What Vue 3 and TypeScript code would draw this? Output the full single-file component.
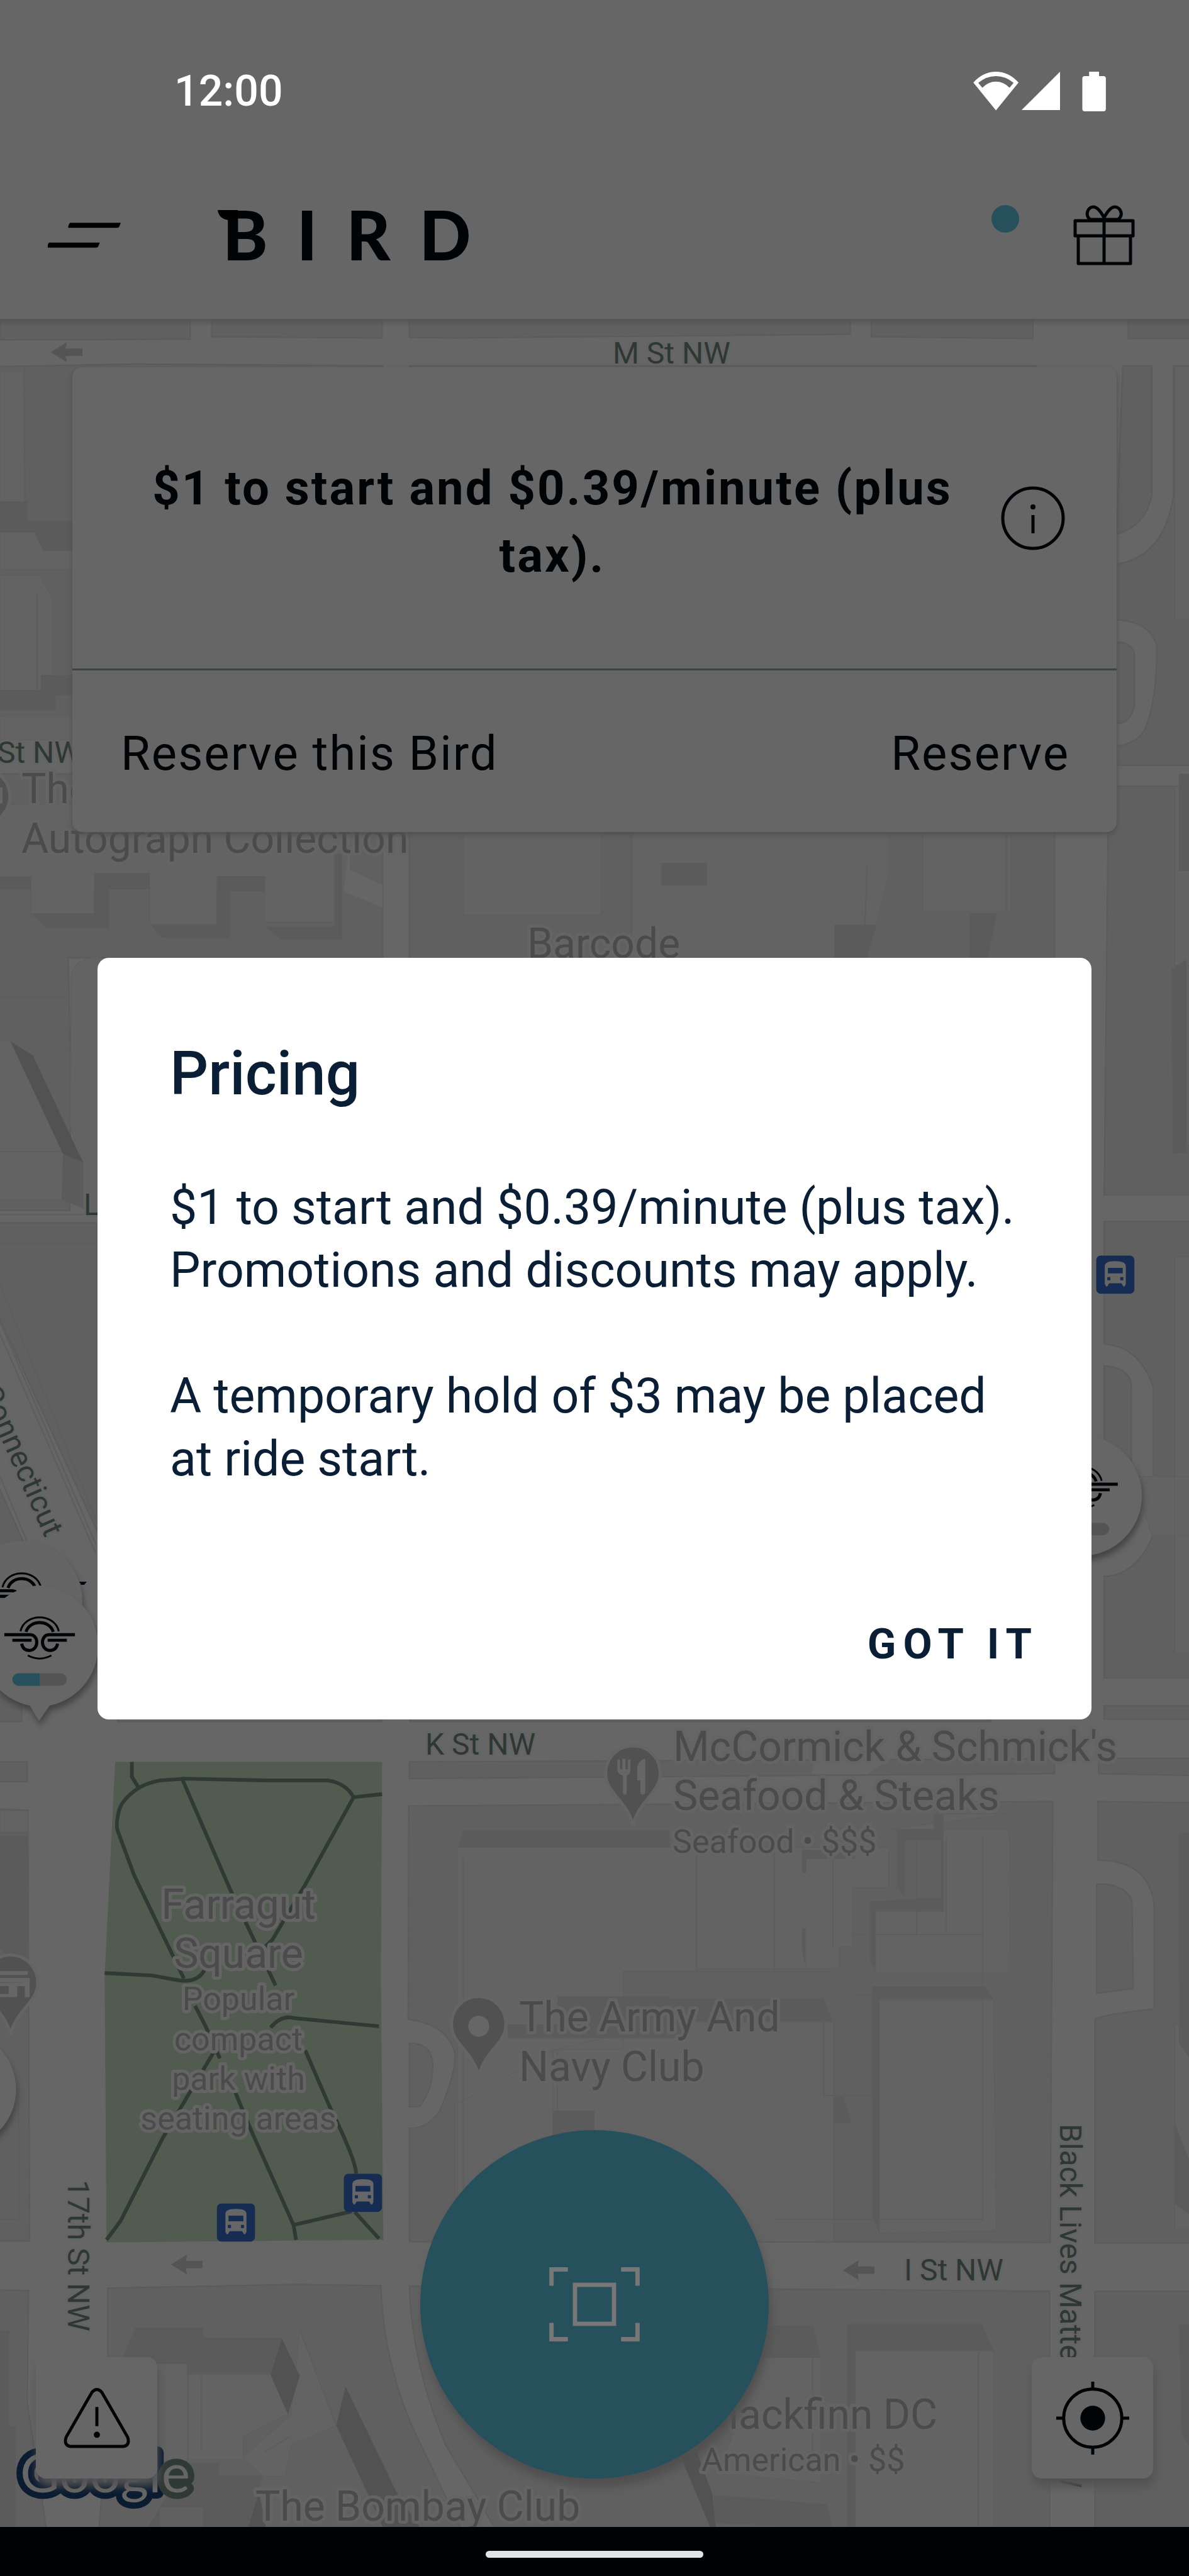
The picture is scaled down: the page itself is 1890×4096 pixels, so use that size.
<script setup lang="ts">
import { ref } from 'vue'

interface MapLabel {
  text: string
  x: number
  y: number
  kind: 'street' | 'place' | 'detail'
  anchor?: 'start' | 'middle' | 'end'
  turn?: number
}

const dialogOpen = ref(true)

const labels: MapLabel[] = [
  { text: 'M St NW', x: 974, y: 578, kind: 'street' },
  { text: 'St NW', x: -4, y: 1213, kind: 'street' },
  { text: 'L St NW', x: 133, y: 1932, kind: 'street' },
  { text: 'Connecticut', x: 72, y: 2446, kind: 'street', anchor: 'end', turn: 66 },
  { text: 'K St NW', x: 676, y: 2790, kind: 'street' },
  { text: 'I St NW', x: 1437, y: 3626, kind: 'street' },
  { text: '17th St NW', x: 108, y: 3466, kind: 'street', turn: 90 },
  { text: 'Black Lives Matter', x: 1685, y: 3377, kind: 'street', turn: 90 },
  { text: 'NW', x: 1685, y: 3956, kind: 'street', anchor: 'end', turn: 90 },
  { text: 'The', x: 34, y: 1277, kind: 'place' },
  { text: 'Autograph Collection', x: 34, y: 1356, kind: 'place' },
  { text: 'Barcode', x: 838, y: 1523, kind: 'place' },
  { text: "McCormick & Schmick's", x: 1070, y: 2800, kind: 'place' },
  { text: 'Seafood & Steaks', x: 1070, y: 2878, kind: 'place' },
  { text: 'Seafood • $$$', x: 1069, y: 2946, kind: 'detail' },
  { text: 'Farragut', x: 379, y: 3051, kind: 'place', anchor: 'middle' },
  { text: 'Square', x: 379, y: 3129, kind: 'place', anchor: 'middle' },
  { text: 'Popular', x: 379, y: 3196, kind: 'detail', anchor: 'middle' },
  { text: 'compact', x: 379, y: 3260, kind: 'detail', anchor: 'middle' },
  { text: 'park with', x: 379, y: 3323, kind: 'detail', anchor: 'middle' },
  { text: 'seating areas', x: 379, y: 3386, kind: 'detail', anchor: 'middle' },
  { text: 'The Army And', x: 825, y: 3230, kind: 'place' },
  { text: 'Navy Club', x: 825, y: 3309, kind: 'place' },
  { text: 'Blackfinn DC', x: 1490, y: 3862, kind: 'place', anchor: 'end' },
  { text: 'American • $$', x: 1115, y: 3929, kind: 'detail' },
  { text: 'The Bombay Club', x: 406, y: 4008, kind: 'place' },
]

const busStops = [
  { x: 1770, y: 2028 },
  { x: 350, y: 3559 },
  { x: 555, y: 3511 },
]

const arrows = [
  { x: 82, y: 569 },
  { x: 276, y: 3658 },
  { x: 1361, y: 3667 },
]

const parkPaths = [
  'M213 2846V2870L224 2888',
  'M300 2873L257 2876Q238 2880 224 2888Q197 2906 192 2925Q186 2950 191 2960L217 3030L297 3196',
  'M294 2873L430 2876H530Q558 2880 571 2903L617 2898',
  'M294 2873L372 3053L445 3207',
  'M571 2903L493 3044L440 3133L412 3160',
  'M169 3187L245 3191L290 3199Q322 3203 332 3178',
  'M315 3240L332 3273L355 3325',
  'M437 3275Q455 3254 475 3260L612 3273',
  'M345 3315L262 3455L195 3587L172 3618',
  'M380 3380L405 3440L474 3594L478 3618',
  'M493 3312L532 3402Q575 3490 575 3511',
  'M474 3594L568 3572M573 3573L612 3616',
]
</script>

<template>
  <main class="screen">
    <div class="status-bar">
      <time class="clock">12:00</time>
      <svg class="status-icons" width="212" height="63" viewBox="0 0 215 64" aria-hidden="true">
        <path fill="#fff" fill-rule="evenodd" d="M0 17.500Q16 0 36.500 0T73 17.500L36.500 62.500ZM8 18L14.500 26Q24 16 36.500 16T58.500 26L65 18Q52 7 36.500 7T8 18Z" />
        <path fill="#fff" d="M78 62L140 0V62Z" />
        <path fill="#fff" d="M187 0H203V7H210Q214 7 214 11V60Q214 64 210 64H180Q176 64 176 60V11Q176 7 180 7H187Z" />
      </svg>
    </div>

    <header class="app-bar">
      <button class="icon-button" type="button" aria-label="Menu">
        <svg width="116" height="40" viewBox="0 0 118 40">
          <path d="M36 0H118L116 5Q115 8 112 8H33Q33 3 36 0ZM2 32H84L82 37Q81 40 78 40H-0Q-1 35 2 32Z" />
        </svg>
      </button>
      <h1 class="wordmark">
        <svg class="wing" width="32" height="16" viewBox="0 0 32 16" aria-hidden="true"><path d="M0 0H32V16H17Q2 14 0 0Z" /></svg>BIRD
      </h1>
      <span class="dot"></span>
      <button class="icon-button" type="button" aria-label="Gifts">
        <svg width="98" height="96" viewBox="0 0 98 96" fill="none" stroke="#000407" stroke-width="5" stroke-linejoin="round">
          <rect x="3" y="25" width="92" height="24" />
          <path d="M8 50V93H91V50M49 25V93M49 20C43 9 38 3 32 3C23 3 18 16 27 23H71C81 16 75 3 66 3C60 3 55 9 49 20" />
        </svg>
      </button>
    </header>

    <section class="map-area">
      <svg class="map" viewBox="0 507 1890 3511" preserveAspectRatio="xMidYMin slice" role="img" aria-label="Map">
        <defs>
          <symbol id="bus" viewBox="0 0 62 62">
            <rect width="62" height="62" rx="8" fill="#172c52" />
            <path fill="#666" fill-rule="evenodd" d="M14 46V17Q14 9 31 9T48 17V46L46 50H44L41 45H21L18 50H16ZM19 20V29H43V20ZM18 35V40H23V35ZM39 35V40H44V35Z" />
          </symbol>
          <g id="pin">
            <path stroke="#646464" stroke-width="5" d="M0 0C25 0 44 20 44 45C44 76 10 88 0 128C-10 88-44 76-44 45C-44 20-25 0 0 0Z" />
          </g>
          <g id="wing-mark" fill="none" stroke="#000407">
            <path stroke-width="3" d="M-31-6C-24-36 24-36 31-6M-19 33Q0 43 19 33" />
            <path stroke-width="5" d="M-22-5C-16-25 16-25 22-5" />
            <path stroke-width="5" d="M-57-.500H-15C-1 0-1 24-16 25Q-27 25-29 14M-44 8.500H-13M57-.500H15C1 0 1 24 16 25Q27 25 29 14M44 8.500H13" />
          </g>
        </defs>

        <g transform="scale(.984375)">
          <rect y="500" width="1920" height="3600" fill="#666" />

          <!-- city blocks -->
          <g class="block">
            <path d="M0 510H307V548L0 549ZM342 510H617V546L342 544ZM661 510H1373V540L735 546L661 545ZM1407 510H1668V547L1407 544ZM1822 510H1930V547H1822Z" />
            <path d="M-5 592L220 588L618 591V1190H-5ZM661 591H1673V1190H661ZM-5 1250H618V1547H110Q115 1700 113 1955H-5Z" />
            <path d="M661 1250H1703V1955H661ZM1813 591H1860V800Q1850 850 1803 863ZM1895 591H1925V1236H1803V1205Q1840 1200 1850 1175Q1868 1130 1868 1045Q1860 1005 1803 1001V911Q1880 900 1895 800ZM1803 1037Q1832 1038 1832 1060V1140Q1825 1170 1803 1168Z" />
            <path d="M1790 1270H1925V1930H1783ZM1783 1973H1925V2710H1783V2546Q1835 2545 1862 2480V2240Q1840 2175 1783 2171ZM1783 2206Q1827 2210 1827 2240V2380H1783ZM1783 2755H1925V2777H1783Z" />
            <path d="M-5 1975H160V2480L-5 2120ZM-5 2395L60 2540H-5ZM-5 2690H35V2781H-5ZM190 2700H617V2781H190ZM662 2700H1600V2781H662Z" />
            <path d="M-5 2846H44V2878H-5ZM-5 2922L45 2924L48 3620H-5ZM661 2846L1703 2841V2865L661 2873ZM1774 2840H1925V2868L1774 2865ZM660 2917L1700 2910L1696 3622L661 3621V3438Q690 3438 710 3410Q735 3350 735 3320Q725 3270 659 3262ZM661 3300Q700 3300 699 3340Q697 3380 677 3403H661Z" />
            <path d="M1773 2910L1925 2912V3623H1768V3262Q1775 3255 1864 3245V3080Q1857 3005 1773 3005ZM1771 3043Q1815 3042 1828 3070L1830 3212L1771 3220Z" />
            <path d="M-5 3699L46 3700L44 3880L75 4085H-5ZM174 3696L480 3690L615 3692Q620 3830 680 3950L745 4085H160L174 3900ZM661 3693L1695 3701V4085H800L720 3950Q665 3820 661 3693ZM1768 3701H1925V4085H1768Z" />
          </g>
          <path fill="#666" d="M565 1345V1405L618 1430V1466L555 1440ZM1315 2841H1440L1400 2866H1310Z" />

          <!-- buildings -->
          <g class="building">
            <path d="M0 600H37L42 844H118V920H0ZM0 930H64L84 965V1115H0ZM0 1157H118V1195H0ZM-5 1300H540V1490H428V1440H350V1500H242V1436H152V1480H50V1416H-5Z" />
            <path d="M-5 1682H17L102 1864L100 1938H-5ZM115 1575Q120 1548 160 1545V1960L134 1952V1877L113 1820Z" />
            <path d="M748 1250H1018V1345H971V1478H748ZM1018 1250H1436V1410L1415 1494H1348V1547H1018ZM1490 1250H1633V1472H1490ZM1897 592H1925V1000H1897ZM1897 1270H1925V1850H1897ZM1830 2385H1925V2480H1860ZM1897 2030H1925V2670H1897Z" />
            <path d="M739 2984H1125V3184H1006V3310H893V3615H739ZM1125 2984H1435V3050H1377V3145H1355V3180H1125ZM1433 2955H1630L1631 3186H1414V3088H1523V2930H1630ZM1420 3230H1604L1609 3603L1420 3607ZM1085 3266H1346V3621H735V3400L900 3310Z" />
            <path d="M304 3835H437L465 3900L393 3935V3973H304ZM254 3818H302V3975H254ZM484 3765L515 3835L543 3918L470 3950L460 4000H425L393 3970L470 3900ZM1381 3797H1604V4085H1381ZM1230 3808H1325V4010L1160 3995ZM1905 2965H1925V3200H1905ZM1897 3270H1925V3600H1897ZM0 3765H15V3920H25V4085H0ZM0 2925H45V2962H0Z" />
          </g>
          <g class="outline">
            <path d="M1125 2990V3184M1250 2990V3184M1345 3000V3145M1587 2968V3205M748 3000V3600M1480 2970V3125M1528 2970V3125M1378 3125H1587M1378 3222H1408V3385H1330V3266M1007 3185H1342M1250 3585H1587V3230M1020 1250V1547M900 3310V3600M325 3840V3960M1580 3800V4080M1312 3808V3990M1625 1250V1472M1400 1400L1395 1547M0 1610H113M0 1860H100M60 960V1115M0 2960H45M30 3360V3585H0M428 3960L470 3935M543 3918L485 3765M1897 1560H1925M40 592V840" />
          </g>
          <g fill="#5b5b5b">
            <path d="M0 810H45V842H118V890H70L55 860H0ZM0 1115H66V1090H118V1123H90V1147H0Z" />
            <path d="M0 1416H50V1475H152V1410H176V1500H75L50 1475V1436H0ZM152 1410H242V1436H176V1500H152ZM242 1436V1493H350V1415H372V1515H262L242 1493ZM350 1415H428V1440H372V1493H350ZM428 1497H540V1380H552V1518H455Z" />
            <path d="M1068 1394H1142V1430H1068ZM1348 1494H1415L1400 1547H1348ZM1566 1475H1610L1595 1547H1566ZM1904 1250H1925V1407H1904ZM1892 1565L1916 1550V1863H1894Z" />
            <path d="M748 2956H1080L1082 2984H739ZM1448 2955H1508V2930H1523V3087H1413V3185L1405 3165V3070H1433L1520 3065V2973H1461V3065L1448 3045ZM1409 3208H1590L1604 3228H1420V3607L1409 3580ZM1295 2988H1380V3003H1302V3025H1295ZM1295 3115H1301V3178L1295 3150Z" />
            <path d="M900 3225H1080V3250H1330L1345 3266H1100V3292H820V3270H900ZM1080 3228H1330L1345 3266H1080ZM893 3409H960V3460H893ZM1346 3387H1362L1375 3429H1346Z" />
            <path d="M218 3760H328V3776H455L437 3835H302V3818H254L200 3806ZM300 3978H354V3998H425L400 4085H328V4050H258V4085H238ZM1368 3754H1585L1604 3797H1381V4085H1368ZM1240 3756H1313L1325 3808H1230ZM1152 4030L1335 4045L1345 4085L1155 4076ZM1904 2960H1925V3330L1904 3300ZM1897 3430L1925 3500V3580L1897 3560ZM1904 3755H1925V3960L1908 3930ZM0 2965H45V3180L0 3150ZM0 3765H15V3920H25V4085H0ZM102 1864L134 1877V1952L100 1938Z" />
          </g>
          <path fill="#525252" d="M17 1682L53 1705L134 1877L102 1864ZM455 3777L484 3838L465 3900L437 3836ZM558 3855L640 4025L680 4085H620L543 3918ZM1100 3970L1125 3960L1150 4028L1156 4085H1148ZM418 4025L430 4085H400Z" />
          <path class="outline" d="M0 1962H160M0 2008H160M0 2075L155 2455M0 2135L155 2495M0 2155L155 2510M0 2385L48 2500" />

          <!-- park -->
          <path fill="#525b4f" d="M186 2846H617L615 3190L619 3618L172 3622L169 3190Z" />
          <path v-for="d in parkPaths" :key="d" :d="d" fill="none" stroke="#303a35" stroke-width="6" />

          <path v-for="a in arrows" :key="a.y" :transform="`translate(${a.x} ${a.y})`" fill="#545454" d="M0 0L26-16L24-6H51V6H24L26 16Z" />

          <use href="#pin" x="773" y="3225" fill="#515151" />
          <circle cx="773" cy="3273" r="17" fill="#666" />
          <use href="#pin" x="1022" y="2820" fill="#515151" />
          <path fill="#666" d="M997 2842H1001V2858H1005V2841H1010V2858H1014V2842H1018V2858Q1018 2866 1012 2868V2895Q1012 2899 1009 2899T1006 2895V2868Q997 2866 997 2858ZM1042 2841V2894Q1042 2899 1038 2899T1034 2894V2876H1029V2856Q1031 2843 1042 2841Z" />
          <use href="#pin" x="17" y="3158" fill="#515151" />
          <path fill="#666" d="M0 3184H45V3190H0ZM0 3195H48V3226H40V3208H28V3226H0V3221H14V3208H0V3203H48L0 3202Z" />
          <use href="#pin" x="-28" y="1242" fill="#515151" />
          <path fill="#666" d="M0 1272H4V1298H0Z" />
          <use v-for="b in busStops" :key="b.x" href="#bus" :x="b.x" :y="b.y" width="62" height="62" />
        </g>

        <text
          v-for="l in labels"
          :key="l.text + l.x"
          :class="['label', l.kind]"
          :x="l.x"
          :y="l.y"
          :text-anchor="l.anchor ?? 'start'"
          :transform="l.turn ? `rotate(${l.turn} ${l.x} ${l.y})` : undefined"
        >{{ l.text }}</text>

        <text class="google" x="32" y="3963">Googl<tspan class="google-e">e</tspan></text>

        <!-- vehicle markers -->
        <g transform="scale(.984375)">
          <g class="marker">
            <circle cx="35" cy="2587" r="98" fill="#656565" />
          </g>
          <use href="#wing-mark" x="35" y="2570" />
          <path fill="#000a14" d="M128 2555H140L136 2560H131Z" />
          <g class="marker">
            <path fill="#666" d="M63 2561A98 98 0 0 1 80 2755L63 2780L48 2755A98 98 0 0 1 63 2561Z" />
          </g>
          <use href="#wing-mark" x="64" y="2641" />
          <rect x="20" y="2703" width="88" height="20" rx="10" fill="#545454" />
          <path fill="#27505d" d="M30 2703H64V2723H30A10 10 0 0 1 30 2703Z" />
          <g class="marker">
            <circle cx="1747" cy="2416" r="97" fill="#666" />
          </g>
          <use href="#wing-mark" x="1748" y="2398" />
          <rect x="1703" y="2460" width="88" height="20" rx="10" fill="#545454" />
          <circle class="marker" cx="-70" cy="3375" r="96" fill="#666" />
        </g>
      </svg>

      <article class="ride-card">
        <div class="price-row">
          <p class="price">$1 to start and $0.39/minute (plus tax).</p>
          <button class="icon-button" type="button" aria-label="Pricing information">
            <svg width="102" height="102" viewBox="0 0 102 102" fill="none" stroke="#000407" stroke-width="5">
              <circle cx="51" cy="51" r="48" />
              <path d="M51 46V75" />
              <circle cx="51" cy="33" r="4" fill="#000407" stroke="none" />
            </svg>
          </button>
        </div>
        <div class="reserve-row">
          <span>Reserve this Bird</span>
          <button class="text-button" type="button">Reserve</button>
        </div>
      </article>

      <div class="map-actions">
        <button class="square-button" type="button" aria-label="Report a problem">
          <svg width="108" height="96" viewBox="0 0 110 98" fill="none" stroke="#000407" stroke-width="5" stroke-linejoin="round">
            <path d="M47 7Q55-2 63 7L105 80Q109 93 98 95H12Q1 93 5 80ZM55 31V62" />
            <circle cx="55" cy="76" r="5" fill="#000407" stroke="none" />
          </svg>
        </button>
        <button class="scan-button" type="button" aria-label="Scan">
          <svg width="144" height="118" viewBox="0 0 146 120" fill="none" stroke="#777" stroke-width="7">
            <path d="M3.500 30V3.500H30M116 3.500H142.500V30M142.500 90V116.500H116M30 116.500H3.500V90" />
            <rect x="41.500" y="28.500" width="63" height="63" />
          </svg>
        </button>
        <button class="square-button" type="button" aria-label="Show my location">
          <svg width="116" height="116" viewBox="0 0 118 118" fill="none" stroke="#000407" stroke-width="5">
            <circle cx="59" cy="59" r="47" />
            <circle cx="59" cy="59" r="20" fill="#000407" stroke="none" />
            <path d="M59 0V12M59 106V118M0 59H12M106 59H118" />
          </svg>
        </button>
      </div>
    </section>

    <footer class="nav-bar"><span class="handle"></span></footer>

    <div v-if="dialogOpen" class="dialog-layer">
      <div class="dialog" role="dialog" aria-modal="true" aria-labelledby="dialog-title">
        <h2 id="dialog-title">Pricing</h2>
        <p>$1 to start and $0.39/minute (plus tax). Promotions and discounts may apply.</p>
        <p>A temporary hold of $3 may be placed at ride start.</p>
        <button class="confirm" type="button" @click="dialogOpen = false">GOT IT</button>
      </div>
    </div>
  </main>
</template>

<style>
body {
  background: #666;
}
</style>

<style scoped>
.screen {
  position: relative;
  display: flex;
  flex-direction: column;
  min-height: 100vh;
  background: #666;
  color: #000407;
  font-family: Roboto, 'Liberation Sans', sans-serif;
}

button {
  padding: 0;
  border: 0;
  background: none;
  color: inherit;
  font: inherit;
  letter-spacing: inherit;
  cursor: pointer;
}

svg {
  display: block;
}

.status-bar {
  display: flex;
  align-items: center;
  justify-content: space-between;
  height: 240px;
  padding: 50px 131px 0 277px;
  box-sizing: border-box;
  color: #fff;
}

.clock {
  font-size: 68px;
  font-weight: 500;
  line-height: 80px;
}

.app-bar {
  display: flex;
  align-items: center;
  height: 267px;
  padding: 0 86px 0 76px;
  box-sizing: border-box;
}

.wordmark {
  position: relative;
  flex: 1;
  margin: 0 0 4px 162px;
  font-family: Lato, 'Liberation Sans', sans-serif;
  font-size: 108px;
  font-weight: 900;
  line-height: 120px;
  letter-spacing: 46px;
}

.wing {
  position: absolute;
  left: -8px;
  top: 22px;
}

.dot {
  width: 44px;
  height: 44px;
  margin: 0 86px 52px 0;
  border-radius: 50%;
  background: #27505d;
}

.map-area {
  position: relative;
  display: flex;
  flex: 1;
  flex-direction: column;
  justify-content: space-between;
  padding: 77px 57px;
  overflow: hidden;
}

.map {
  position: absolute;
  inset: 0;
  width: 100%;
  height: 100%;
}

.map-area::before {
  content: '';
  position: absolute;
  inset: 0 0 auto;
  z-index: 1;
  height: 12px;
  background: linear-gradient(#545454, #60606000);
}

.block {
  fill: #606060;
  stroke: #5b5b5b;
  stroke-width: 2;
}

.building {
  fill: #636363;
  stroke: #5d5d5d;
  stroke-width: 1;
}

.outline {
  fill: none;
  stroke: #5d5d5d;
  stroke-width: 2;
}

.marker {
  filter: drop-shadow(2px 8px 5px #444);
}

.label {
  fill: #4b4b4b;
  stroke: #646464;
  stroke-width: 10px;
  stroke-linejoin: round;
  paint-order: stroke;
}

.place {
  font-size: 66px;
}

.detail {
  font-size: 52px;
}

.street {
  fill: #2e3833;
  stroke-width: 6px;
  font-size: 48px;
}

.google {
  fill: #666;
  stroke: #0b1c31;
  stroke-width: 20px;
  stroke-linejoin: round;
  paint-order: stroke;
  font-family: Lato, 'Liberation Sans', sans-serif;
  font-size: 86px;
}

.google-e {
  stroke: #303a35;
}

.ride-card {
  position: relative;
  margin: 0 58px;
  border-radius: 16px;
  background: #666;
  box-shadow: 0 4px 8px #505050;
  font-size: 76px;
  letter-spacing: 2px;
}

.price-row {
  display: flex;
  align-items: center;
  gap: 70px;
  height: 482px;
  padding: 0 82px 0 120px;
  box-sizing: border-box;
  border-bottom: 3px solid #3a4440;
}

.price {
  flex: 1;
  margin: 12px 0 0;
  font-weight: 700;
  line-height: 107px;
  letter-spacing: 3px;
  text-align: center;
}

.reserve-row {
  display: flex;
  align-items: center;
  justify-content: space-between;
  height: 257px;
  padding: 6px 75px 0 77px;
  box-sizing: border-box;
}

.map-actions {
  position: relative;
  display: flex;
  align-items: flex-end;
  justify-content: space-between;
}

.square-button,
.scan-button {
  display: flex;
  align-items: center;
  justify-content: center;
  background: #666;
}

.square-button {
  width: 193px;
  height: 193px;
  border-radius: 16px;
  box-shadow: 2px 12px 14px #525252;
}

.scan-button {
  width: 554px;
  height: 554px;
  border-radius: 50%;
  background: #27505d;
  box-shadow: 4px 14px 14px #505050;
}

.nav-bar {
  display: flex;
  align-items: center;
  justify-content: center;
  height: 78px;
  background: #000306;
}

.handle {
  width: 346px;
  height: 11px;
  margin-top: 8px;
  border-radius: 6px;
  background: #e1e3e5;
}

.dialog-layer {
  position: absolute;
  inset: 0;
  display: flex;
  align-items: center;
  justify-content: center;
  padding: 160px 155px 0;
}

.dialog {
  flex: 1;
  display: flex;
  flex-direction: column;
  padding: 124px 96px 76px 115px;
  border-radius: 18px;
  background: #fff;
  color: #0a1f35;
  font-size: 77px;
  line-height: 100px;
}

.dialog h2 {
  margin: 0 0 103px;
  font-size: 96px;
  font-weight: 500;
  line-height: 120px;
}

.dialog p {
  margin: 0 0 100px;
}

.confirm {
  align-self: flex-end;
  margin: 100px -12px 0 0;
  font-size: 67px;
  font-weight: 700;
  line-height: 88px;
  letter-spacing: 11px;
}
</style>
